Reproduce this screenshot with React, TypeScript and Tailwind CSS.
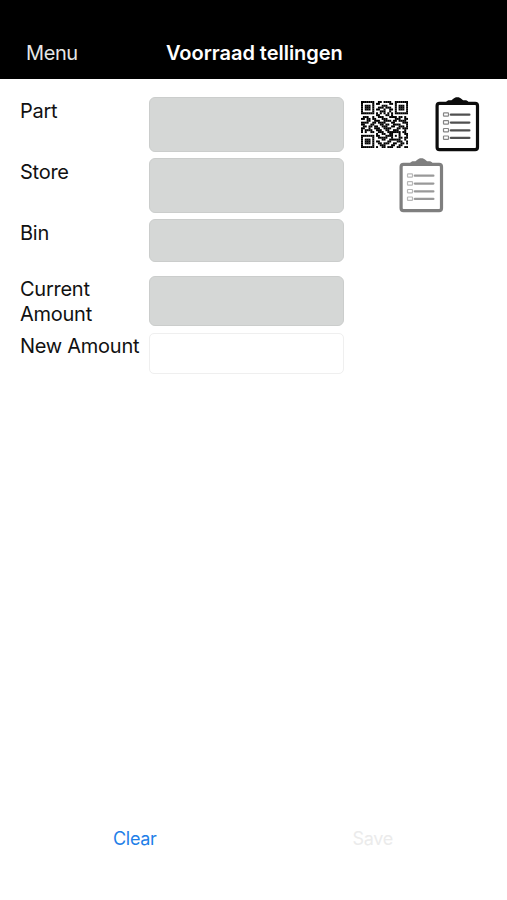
import React from "react";

const QR_ROWS = [
  "1111111001101111001111111",
  "1000001011000001101000001",
  "1011101000011100001011101",
  "1011101001110111001011101",
  "1011101011001001101011101",
  "1000001000111001001000001",
  "1111111010101010101111111",
  "0000000011000110100000000",
  "0111001001110001111011010",
  "1101101100011100001110011",
  "0001100111001111011011110",
  "1111001101111000110000111",
  "1100011000110110011110001",
  "0110110110011100110011101",
  "1100100111001111000110111",
  "1011110011100110011100010",
  "1010011001110011111110110",
  "0000000010011001100010011",
  "1111111011000111101010001",
  "1000001001111100100011011",
  "1011101000011001111110010",
  "1011101011000011000111001",
  "1011101001101110011001101",
  "1000001000111000110011000",
  "1111111010011011100110011",
];

function QrIcon() {
  return (
    <svg className="h-[47px] w-[47px]" viewBox="0 0 25 25" fill="black">
      {QR_ROWS.map((row, y) =>
        row
          .split("")
          .map((c, x) => (c === "1" ? <rect key={`${x}-${y}`} x={x} y={y} width="1.06" height="1.06" /> : null)),
      )}
    </svg>
  );
}

function ClipboardIcon({ color, line }: { color: string; line: string }) {
  return (
    <svg className="h-[55px] w-[45px]" viewBox="0 0 45 55" fill="none">
      <rect x="2.1" y="6.3" width="40.4" height="46.4" rx="2.4" stroke={color} strokeWidth="3.2" />
      <path d="M10.8 7.8V6Q11.2 3.8 13.4 3.3H15.8C17.8 3 18.4 0.2 22.3 0.2S26.8 3 28.8 3.3H31.2Q33.4 3.8 33.8 6V7.8Z" fill={color} />
      {[17.4, 25.3, 33.1, 40.6].map((y) => (
        <g key={y} stroke={line}>
          <rect x="8.5" y={y - 1.6} width="5" height="3.4" rx="0.6" strokeWidth="1.2" opacity="0.7" />
          <path d={`M15.8 ${y + 0.3}H34.4`} strokeWidth="2.2" strokeLinecap="round" />
        </g>
      ))}
    </svg>
  );
}

const label = "text-[20px] leading-[24.5px] tracking-[-0.26px]";
const field = "w-[195px] rounded-[6px] border border-[#cbcdcc] bg-[#d5d7d6] outline-none";

export default function App() {
  return (
    <div className="flex h-[900px] w-[507px] flex-col bg-white font-['Inter','Liberation_Sans',sans-serif] text-[#111]">
      <header className="flex h-[79px] shrink-0 items-end bg-black pb-[11px] pl-[26px] text-[20px] leading-[30px] text-white">
        <button className="w-[140px] text-left tracking-[-0.4px] text-[#e6e6e6]">Menu</button>
        <h1 className="whitespace-nowrap font-semibold tracking-[-0.03px]">Voorraad tellingen</h1>
      </header>

      <main className="flex flex-1 flex-col pt-[18px]">
        <div className="flex h-[61px] pl-[20px]">
          <label className={`w-[129px] pt-[1.5px] ${label}`}>Part</label>
          <input readOnly className={`h-[55px] ${field}`} />
          <button className="ml-[17px] mt-[4px] h-[47px]"><QrIcon /></button>
          <button className="ml-[27px] h-[55px]"><ClipboardIcon color="#0c0c0c" line="#505050" /></button>
        </div>
        <div className="flex h-[61px] pl-[20px]">
          <label className={`w-[129px] pt-[1.5px] ${label}`}>Store</label>
          <input readOnly className={`h-[55px] ${field}`} />
          <button className="ml-[55px] h-[55px]"><ClipboardIcon color="#7f7f7f" line="#999999" /></button>
        </div>
        <div className="flex h-[57px] pl-[20px]">
          <label className={`w-[129px] pt-[1.5px] ${label}`}>Bin</label>
          <input readOnly className={`h-[43px] ${field}`} />
        </div>
        <div className="flex h-[57px] pl-[20px]">
          <label className={`w-[129px] pt-px ${label}`}>Current<br />Amount</label>
          <input readOnly className={`h-[50px] ${field}`} />
        </div>
        <div className="flex pl-[20px]">
          <label className={`w-[129px] whitespace-nowrap pt-px ${label}`}>New Amount</label>
          <input className="h-[41px] w-[195px] rounded-[5px] border border-[#efefef] bg-white outline-none" />
        </div>
      </main>

      <footer className="flex h-[76px] shrink-0 items-start text-[18px] leading-[30px] tracking-[-0.3px]">
        <button className="ml-[113px] text-[#1f7fe8]">Clear</button>
        <button className="ml-[196px] text-[#ebebeb]">Save</button>
      </footer>
    </div>
  );
}
